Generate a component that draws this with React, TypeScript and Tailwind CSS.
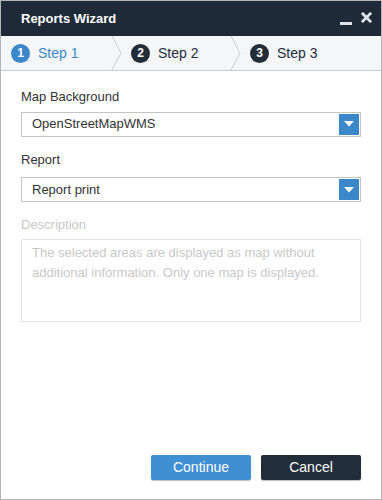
function StepBadge({ n, active }: { n: number; active?: boolean }) {
  return (
    <span
      className={
        'flex h-[19px] w-[19px] items-center justify-center rounded-full text-[12px] font-bold text-white ' +
        (active ? 'bg-[#3a87c9]' : 'bg-[#222d3a]')
      }
    >
      {n}
    </span>
  );
}

function Chevron() {
  return (
    <svg width="12" height="34" viewBox="0 0 12 34" className="shrink-0">
      <path d="M1 0 L10 17 L1 34" fill="none" stroke="#c9cdd2" strokeWidth="1" />
    </svg>
  );
}

function Select({ value }: { value: string }) {
  return (
    <div className="flex h-[25px] items-center border border-[#c4c4c4] bg-white pl-[10px] pr-px">
      <span className="flex-1 text-[13px] text-[#333]">{value}</span>
      <span className="flex h-[21px] w-[20px] items-center justify-center bg-[#3a87c9]">
        <svg width="10" height="6" viewBox="0 0 10 6">
          <path d="M0 0 H10 L5 5.5 Z" fill="#fff" />
        </svg>
      </span>
    </div>
  );
}

export default function App() {
  return (
    <div
      className="flex h-[500px] w-[382px] flex-col border border-[#b5b5b5] bg-white"
      style={{ fontFamily: '"Liberation Sans", Arial, sans-serif' }}
    >
      {/* title bar */}
      <div className="flex h-[35px] items-center bg-[#1f2a38] pl-[20px] pr-[9px]">
        <span className="flex-1 text-[13px] font-bold text-white">Reports Wizard</span>
        <span className="mt-[10px] mr-[9px] h-[3px] w-[12px] bg-[#dfe3e8]" />
        <svg width="11" height="11" viewBox="0 0 12 12" className="mb-[2px]">
          <path d="M2 2 L10 10 M10 2 L2 10" stroke="#dfe3e8" strokeWidth="3" strokeLinecap="square" />
        </svg>
      </div>

      {/* steps */}
      <div className="flex h-[35px] items-center border-b border-[#c8cbcf] bg-[#f4f6f8] pl-[10px]">
        <div className="flex w-[100px] items-center gap-[8px]">
          <StepBadge n={1} active />
          <span className="text-[14px] text-[#3a87c9]">Step 1</span>
        </div>
        <Chevron />
        <div className="ml-[8px] flex w-[99px] items-center gap-[8px]">
          <StepBadge n={2} />
          <span className="text-[14px] text-[#222d3a]">Step 2</span>
        </div>
        <Chevron />
        <div className="ml-[8px] flex items-center gap-[8px]">
          <StepBadge n={3} />
          <span className="text-[14px] text-[#222d3a]">Step 3</span>
        </div>
      </div>

      {/* body */}
      <div className="flex flex-1 flex-col px-[20px] pt-[16px]">
        <label className="mb-[5px] text-[13px] text-[#333]">Map Background</label>
        <Select value="OpenStreetMapWMS" />
        <label className="mt-[13px] mb-[8px] text-[13px] text-[#333]">Report</label>
        <Select value="Report print" />
        <label className="mt-[13px] mb-[4px] text-[13px] text-[#c8c8c8]">Description</label>
        <div className="h-[83px] border border-[#e4e4e4] px-[10px] pt-[3px] text-[13px] leading-[20px] text-[#c8c8c8]">
          The selected areas are displayed as map without additional information. Only one map is displayed.
        </div>

        <div className="mt-auto mb-[19px] flex justify-end gap-[10px]">
          <button className="h-[25px] w-[100px] rounded-[2px] bg-[#3f8fd2] text-[14px] text-white shadow-[0_1px_1px_rgba(0,0,0,0.25)]">
            Continue
          </button>
          <button className="h-[25px] w-[100px] rounded-[2px] bg-[#222d3a] text-[14px] text-white shadow-[0_1px_1px_rgba(0,0,0,0.25)]">
            Cancel
          </button>
        </div>
      </div>
    </div>
  );
}
